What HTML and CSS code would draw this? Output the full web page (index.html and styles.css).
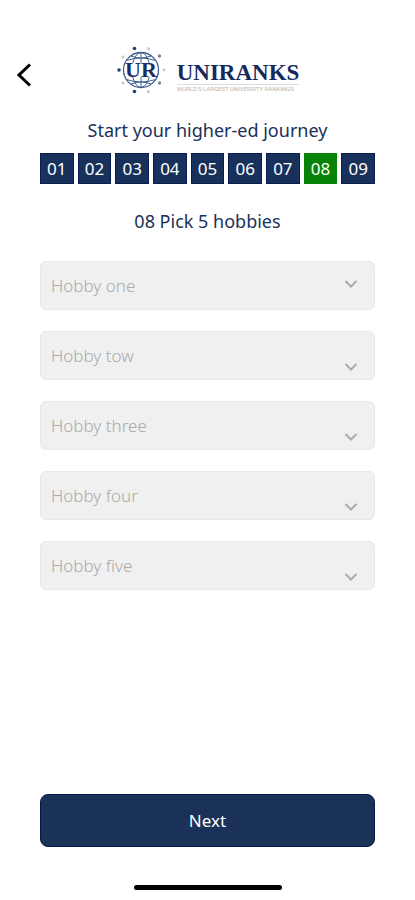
FILE: index.html
```html
<!DOCTYPE html>
<html lang="en">
<head>
    <meta charset="UTF-8">
    <meta name="viewport" content="width=device-width, initial-scale=1.0">
    <title>UNIRANKS - Pick 5 hobbies</title>
    <link rel="stylesheet" href="styles.css">
</head>
<body>
    <header class="header">
        <button type="button" class="back" aria-label="Back">
            <svg width="16" height="24" viewBox="0 0 16 24" fill="none" stroke="#000" stroke-width="3">
                <path d="M14 1.5 3 12l11 10.5"/>
            </svg>
        </button>
        <div class="logo">
            <svg class="globe" width="50" height="50" viewBox="0 0 50 50">
                <g fill="none" stroke="#42608f" stroke-width="1">
                    <circle cx="25" cy="25" r="17.5" stroke-width="1.3"/>
                    <ellipse cx="25" cy="25" rx="9" ry="17.5"/>
                    <path d="M25 7.500v35M10.5 15.5q14.5-5 29 0M10.5 34.5q14.5 5 29 0M15 11q10 4 20 0M15 39q10-4 20 0"/>
                </g>
                <path d="M10 18h30v14H10z" fill="#fff"/>
                <text x="25" y="32" text-anchor="middle" class="globe-text">UR</text>
                <g fill="#1e3f78">
                    <circle cx="18.5" cy="3.5" r="1.8"/>
                    <circle cx="3" cy="25" r="1.8"/>
                    <circle cx="18.5" cy="46.5" r="1.8"/>
                </g>
                <g fill="#7b8494">
                    <circle cx="43.5" cy="11" r="1.7"/>
                    <circle cx="43.5" cy="38" r="1.7"/>
                </g>
                <g fill="#c4c4c4">
                    <circle cx="32.5" cy="3.5" r="1.5"/>
                    <circle cx="32.5" cy="46.5" r="1.5"/>
                    <circle cx="7" cy="12" r="1.4"/>
                    <circle cx="7" cy="38" r="1.4"/>
                    <circle cx="48" cy="25" r="1.4"/>
                </g>
            </svg>
            <div class="brand">
                <span class="brand-name">UNIRANKS</span>
                <span class="brand-tag">WORLD'S LARGEST UNIVERSITY RANKINGS</span>
            </div>
        </div>
    </header>
    <main class="content">
        <h1>Start your higher-ed journey</h1>
        <ol class="steps">
            <li>01</li>
            <li>02</li>
            <li>03</li>
            <li>04</li>
            <li>05</li>
            <li>06</li>
            <li>07</li>
            <li class="active">08</li>
            <li>09</li>
        </ol>
        <h2>08 Pick 5 hobbies</h2>
        <form class="hobbies" id="hobbyForm">
            <div class="field first">
                <select name="hobby1" aria-label="Hobby one"><option value="">Hobby one</option></select>
                <svg width="14" height="10" viewBox="0 0 14 10"><path d="M1.5 2 7 7.5 12.5 2"/></svg>
            </div>
            <div class="field">
                <select name="hobby2" aria-label="Hobby tow"><option value="">Hobby tow</option></select>
                <svg width="14" height="10" viewBox="0 0 14 10"><path d="M1.5 2 7 7.5 12.5 2"/></svg>
            </div>
            <div class="field">
                <select name="hobby3" aria-label="Hobby three"><option value="">Hobby three</option></select>
                <svg width="14" height="10" viewBox="0 0 14 10"><path d="M1.5 2 7 7.5 12.5 2"/></svg>
            </div>
            <div class="field">
                <select name="hobby4" aria-label="Hobby four"><option value="">Hobby four</option></select>
                <svg width="14" height="10" viewBox="0 0 14 10"><path d="M1.5 2 7 7.5 12.5 2"/></svg>
            </div>
            <div class="field">
                <select name="hobby5" aria-label="Hobby five"><option value="">Hobby five</option></select>
                <svg width="14" height="10" viewBox="0 0 14 10"><path d="M1.5 2 7 7.5 12.5 2"/></svg>
            </div>
        </form>
    </main>
    <footer class="footer">
        <button type="submit" form="hobbyForm" class="next">Next</button>
        <div class="home-bar"></div>
    </footer>
</body>
</html>
```
FILE: styles.css
```css
* {
    box-sizing: border-box;
}
body {
    font-family: "Noto Sans", "Open Sans", sans-serif;
    display: flex;
    flex-direction: column;
    min-height: 100vh;
    margin: 0;
    background-color: white;
    color: #1a3158;
}
.header {
    display: grid;
    grid-template-columns: 36px 1fr 36px;
    align-items: center;
    padding: 45px 16px 0;
}
.back {
    display: flex;
    padding: 10px 0 0;
    border: none;
    background: none;
    cursor: pointer;
}
.logo {
    display: flex;
    justify-content: center;
    gap: 11px;
}
.globe-text {
    font: bold 22px "Liberation Serif", serif;
    fill: #1b2f66;
}
.brand {
    display: flex;
    flex-direction: column;
    padding-top: 17px;
}
.brand-name {
    font: bold 23px/22px "Liberation Serif", serif;
    color: #14295f;
    border-bottom: 1px solid #ddd;
}
.brand-tag {
    font: 6px/8px Roboto, sans-serif;
    color: #b5b5b5;
}
.content {
    padding: 0 40px;
}
h1, h2 {
    margin: 0;
    font-size: 18px;
    font-weight: 400;
    line-height: 26px;
    text-align: center;
}
h1 {
    margin-top: 22px;
}
h2 {
    margin: 24px 0 27px;
}
.steps {
    display: flex;
    gap: 4px;
    margin: 10px 0 0;
    padding: 0;
    list-style: none;
}
.steps li {
    flex: 1;
    background-color: #18315b;
    border: 1px solid #0b1c50;
    color: white;
    font-size: 17px;
    line-height: 29px;
    text-align: center;
}
.steps .active {
    background-color: #078407;
    border-color: #078407;
}
.hobbies {
    display: flex;
    flex-direction: column;
    gap: 21px;
}
.field {
    position: relative;
}
.field select {
    display: block;
    width: 100%;
    height: 49px;
    padding: 0 40px 0 10px;
    appearance: none;
    background-color: #f0f0f0;
    border: 1px solid #e8e8e8;
    border-radius: 6px;
    font: 300 17px "Noto Sans", "Open Sans", sans-serif;
    color: #aaa;
}
.field svg {
    position: absolute;
    right: 17px;
    bottom: 8px;
    fill: none;
    stroke: #aaa;
    stroke-width: 2;
    pointer-events: none;
}
.field.first svg {
    bottom: 21px;
}
.footer {
    margin-top: auto;
    padding: 0 40px 10px;
}
.next {
    display: block;
    width: 100%;
    height: 53px;
    background-color: #1a3158;
    border: 1px solid #06174d;
    border-radius: 8px;
    color: white;
    font: 17px "Noto Sans", "Open Sans", sans-serif;
    cursor: pointer;
}
.home-bar {
    width: 148px;
    height: 5px;
    margin: 38px auto 0;
    background-color: black;
    border-radius: 3px;
}
```
